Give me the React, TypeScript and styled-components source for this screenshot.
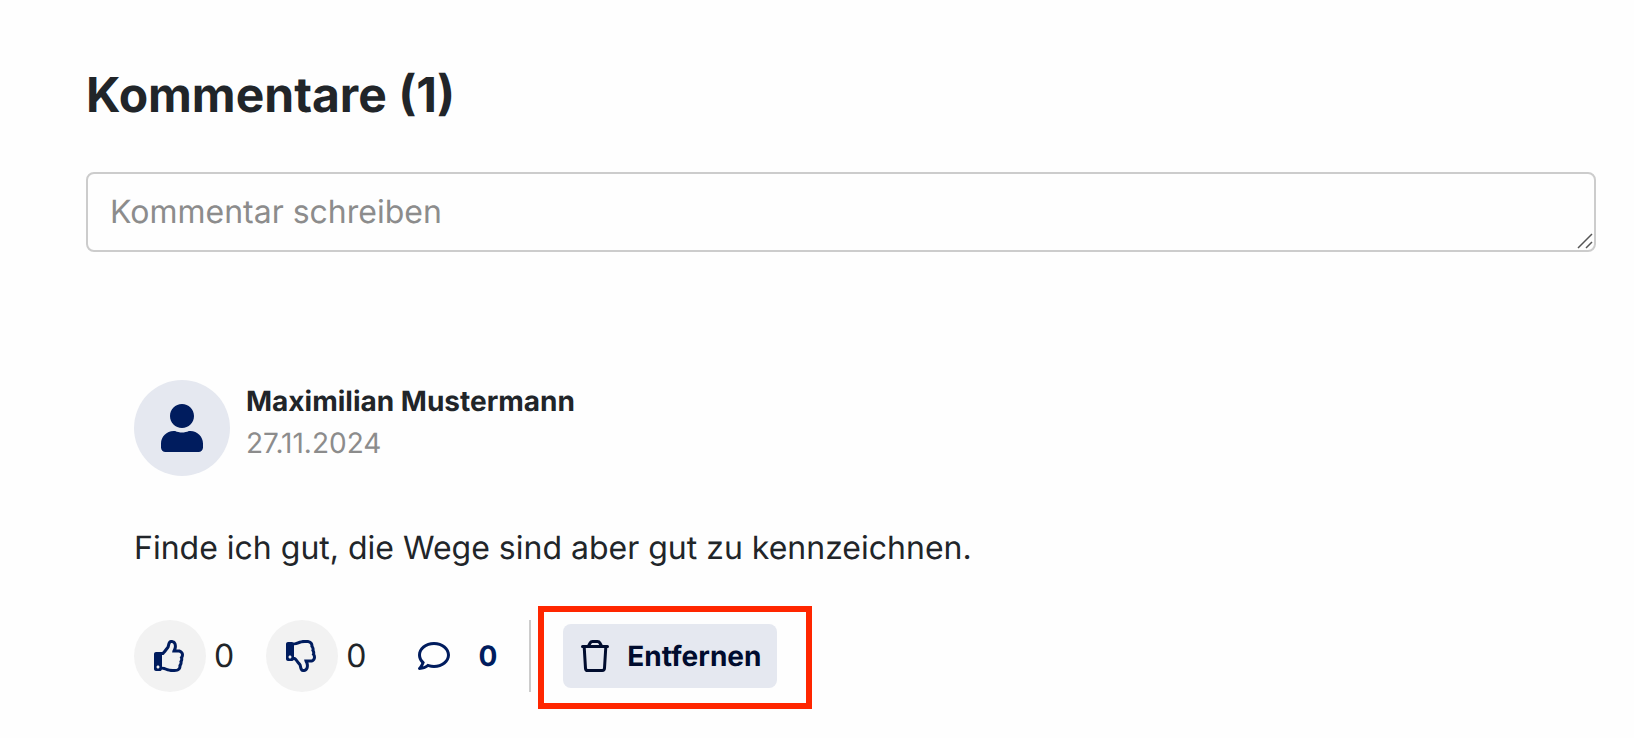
import React from "react";
import styled, { createGlobalStyle } from "styled-components";
import { FaRegComment, FaRegThumbsDown, FaRegThumbsUp, FaUser } from "react-icons/fa";

const color = {
  text: "#212529",
  muted: "#8c8c8c",
  border: "#cccccc",
  navy: "#001c5e",
  ink: "#000c2e",
  tint: "#e5e8f0",
  grey: "#f2f2f2",
  mark: "#ff2600",
};

const GlobalStyle = createGlobalStyle`
  *, *::before, *::after { box-sizing: border-box; }
  body {
    margin: 0;
    background: #fefefe;
    color: ${color.text};
    font: 400 32px/48px Inter, "Liberation Sans", sans-serif;
    text-rendering: geometricPrecision;
  }
  button, textarea { font: inherit; color: inherit; text-rendering: inherit; }
`;

const Section = styled.main`
  padding: 66px 38px 46px 86px;
`;

const Heading = styled.h2`
  margin: 0 0 48px;
  font-size: 48px;
  line-height: 58px;
  font-weight: 700;
`;

const InputWrap = styled.div`
  position: relative;
  display: flex;
`;

const CommentInput = styled.textarea`
  width: 100%;
  height: 80px;
  min-height: 80px;
  padding: 14px 22px;
  border: 2px solid ${color.border};
  border-radius: 8px;
  background: transparent;
  overflow: hidden;
  resize: vertical;

  &::placeholder { color: ${color.muted}; opacity: 1; }
  &::-webkit-resizer { background: transparent; }
`;

const ResizeGrip = styled.svg`
  position: absolute;
  right: 3px;
  bottom: 3px;
  pointer-events: none;
`;

const Comment = styled.article`
  margin: 128px 0 0;
  padding-left: 48px;
`;

const Author = styled.header`
  display: flex;
  gap: 16px;
`;

const Avatar = styled.div`
  display: flex;
  align-items: center;
  justify-content: center;
  width: 96px;
  height: 96px;
  border-radius: 50%;
  background: ${color.tint};
  color: ${color.navy};
`;

const Meta = styled.div`
  display: flex;
  flex-direction: column;
  font-size: 28px;
  line-height: 42px;
`;

const PostDate = styled.time`
  color: ${color.muted};
`;

const Body = styled.p`
  margin: 48px 0;
`;

const Actions = styled.footer`
  display: flex;
  align-items: center;
`;

const Vote = styled.div`
  display: flex;
  align-items: center;
  gap: 8px;
  margin-right: 32px;
`;

const RoundButton = styled.button`
  display: flex;
  align-items: center;
  justify-content: center;
  width: 72px;
  height: 72px;
  padding: 0;
  border: 0;
  border-radius: 50%;
  background: ${color.grey};
  color: ${color.navy};
  cursor: pointer;
`;

const ReplyButton = styled.button`
  display: flex;
  align-items: center;
  gap: 28px;
  height: 72px;
  padding: 0 32px 0 20px;
  border: 0;
  background: none;
  color: ${color.navy};
  font-size: 28px;
  font-weight: 700;
  cursor: pointer;
`;

const Divider = styled.span`
  width: 2px;
  height: 72px;
  margin-right: 32px;
  background: ${color.border};
`;

const Highlight = styled.div`
  position: relative;

  &::after {
    content: "";
    position: absolute;
    inset: -18px -35px -21px -25px;
    border: 6px solid ${color.mark};
    pointer-events: none;
  }
`;

const RemoveButton = styled.button`
  display: flex;
  align-items: center;
  gap: 16px;
  height: 64px;
  padding: 0 16px;
  border: 0;
  border-radius: 8px;
  background: ${color.tint};
  color: ${color.ink};
  font-size: 28px;
  font-weight: 700;
  cursor: pointer;
`;

const TrashIcon = () => (
  <svg width="32" height="32" viewBox="0 0 32 32" fill="none" stroke="currentColor" strokeWidth="3" strokeLinecap="round" strokeLinejoin="round" aria-hidden="true">
    <path d="M3.5 6.5h25M9.5 6l1.6-3q.8-1.5 2.4-1.5h5q1.6 0 2.4 1.5l1.6 3" />
    <path d="M5.2 7l1.3 21.3q.1 2.2 2.3 2.2h14.4q2.2 0 2.3-2.2L26.8 7" />
  </svg>
);

export default function App() {
  return (
    <>
      <GlobalStyle />
      <Section>
        <Heading>Kommentare (1)</Heading>
        <InputWrap>
          <CommentInput rows={1} placeholder="Kommentar schreiben" aria-label="Kommentar schreiben" />
          <ResizeGrip width="16" height="16" viewBox="0 0 16 16" stroke="#555" strokeWidth="1.5" aria-hidden="true">
            <path d="M1 15 15 1M9 15l6-6" />
          </ResizeGrip>
        </InputWrap>
        <Comment>
          <Author>
            <Avatar>
              <FaUser size={48} />
            </Avatar>
            <Meta>
              <strong>Maximilian Mustermann</strong>
              <PostDate dateTime="2024-11-27">27.11.2024</PostDate>
            </Meta>
          </Author>
          <Body>Finde ich gut, die Wege sind aber gut zu kennzeichnen.</Body>
          <Actions>
            <Vote>
              <RoundButton type="button" aria-label="Gefällt mir">
                <FaRegThumbsUp size={32} />
              </RoundButton>
              <span>0</span>
            </Vote>
            <Vote>
              <RoundButton type="button" aria-label="Gefällt mir nicht">
                <FaRegThumbsDown size={32} />
              </RoundButton>
              <span>0</span>
            </Vote>
            <ReplyButton type="button" aria-label="Antworten: 0">
              <FaRegComment size={32} />
              <span>0</span>
            </ReplyButton>
            <Divider />
            <Highlight>
              <RemoveButton type="button">
                <TrashIcon />
                Entfernen
              </RemoveButton>
            </Highlight>
          </Actions>
        </Comment>
      </Section>
    </>
  );
}
